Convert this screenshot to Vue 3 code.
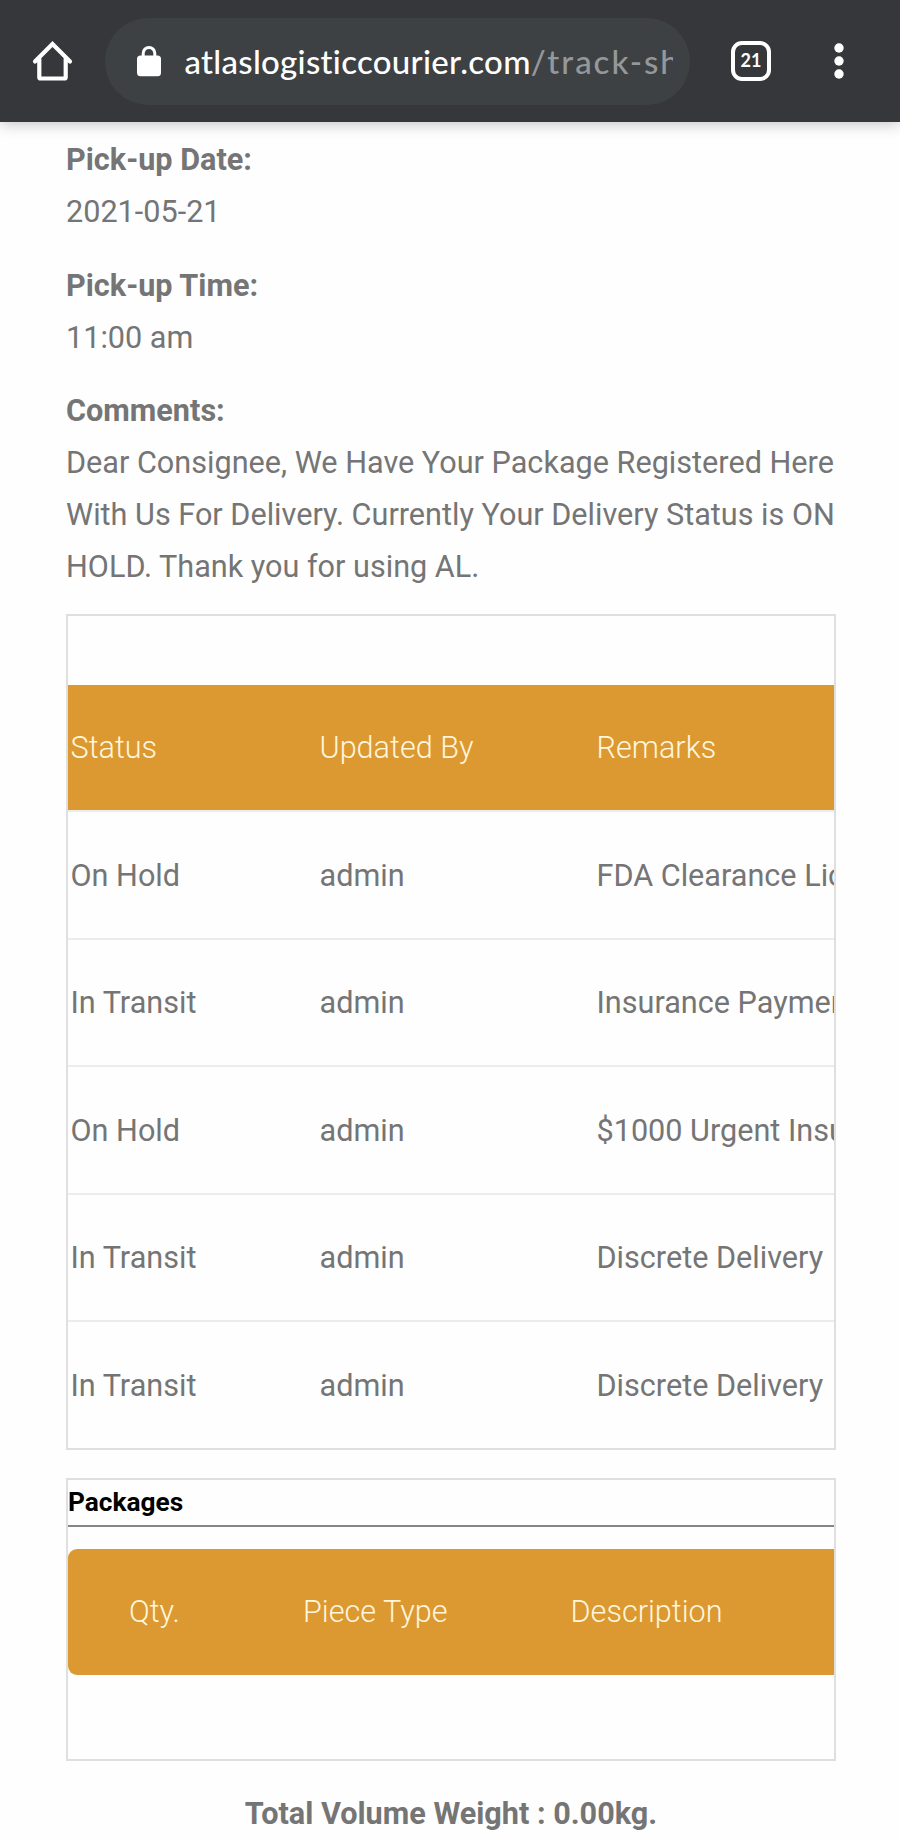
<script setup>
const details = [
  { label: 'Pick-up Date:', lines: ['2021-05-21'] },
  { label: 'Pick-up Time:', lines: ['11:00 am'] },
  {
    label: 'Comments:',
    lines: [
      'Dear Consignee, We Have Your Package Registered Here',
      'With Us For Delivery. Currently Your Delivery Status is ON',
      'HOLD. Thank you for using AL.',
    ],
  },
]

const history = [
  { status: 'On Hold', by: 'admin', remarks: 'FDA Clearance License' },
  { status: 'In Transit', by: 'admin', remarks: 'Insurance Payment' },
  { status: 'On Hold', by: 'admin', remarks: '$1000 Urgent Insurance' },
  { status: 'In Transit', by: 'admin', remarks: 'Discrete Delivery' },
  { status: 'In Transit', by: 'admin', remarks: 'Discrete Delivery' },
]
</script>

<template>
  <div class="screen">
    <header class="toolbar">
      <svg class="home" width="44" height="44" viewBox="0 0 44 44" fill="none" stroke="#fff" stroke-width="4.2" stroke-linecap="round" stroke-linejoin="round">
        <path d="M5 22.500 22.500 5 40 22.500" stroke-linejoin="miter" />
        <path d="M9.300 20v18.200q0 1.300 1.300 1.300h23.800q1.300 0 1.300-1.300V20" />
      </svg>
      <div class="address">
        <svg class="lock" width="24" height="32" viewBox="0 0 24 32">
          <path d="M6.200 12V8.200a5.800 5.800 0 0 1 11.600 0V12" fill="none" stroke="#fff" stroke-width="3" />
          <rect x="0" y="10.500" width="24" height="20.800" rx="3.500" fill="#fff" />
        </svg>
        <div class="url"><span class="host">atlaslogisticcourier.com</span><span class="path">/track-sh</span></div>
      </div>
      <div class="tabs">21</div>
      <svg class="menu" width="12" height="38" viewBox="0 0 12 38" fill="#fff">
        <circle cx="6" cy="6" r="4.700" />
        <circle cx="6" cy="19" r="4.700" />
        <circle cx="6" cy="32" r="4.700" />
      </svg>
    </header>

    <main class="content">
      <section v-for="item in details" :key="item.label" class="detail">
        <strong>{{ item.label }}</strong>
        <div v-for="line in item.lines" :key="line">{{ line }}</div>
      </section>

      <section class="panel history">
        <div class="row head"><span>Status</span><span>Updated By</span><span>Remarks</span></div>
        <div v-for="(row, i) in history" :key="i" class="row">
          <span>{{ row.status }}</span><span>{{ row.by }}</span><span>{{ row.remarks }}</span>
        </div>
      </section>

      <section class="panel packages">
        <h2>Packages</h2>
        <div class="package-head"><span>Qty.</span><span>Piece Type</span><span>Description</span></div>
      </section>

      <p class="total">Total Volume Weight : 0.00kg.</p>
    </main>
  </div>
</template>

<style>
body {
  margin: 0;
  background: #fefefe;
}
</style>

<style scoped>
.screen {
  width: 900px;
  height: 1840px;
  overflow: hidden;
  background: #fefefe;
  color: #757575;
  font: 400 30.625px/52px Roboto, "Liberation Sans", sans-serif;
}
.toolbar {
  box-sizing: border-box;
  height: 122px;
  padding: 0 55px 0 30px;
  display: flex;
  align-items: center;
  background: #36373b;
  box-shadow: 0 2px 14px rgba(0, 0, 0, 0.24);
}
.home {
  flex: none;
}
.address {
  box-sizing: border-box;
  width: 585px;
  height: 87px;
  margin-left: 31px;
  padding: 0 17px 0 32px;
  border-radius: 44px;
  display: flex;
  align-items: center;
  background: #3d4144;
}
.lock {
  flex: none;
}
.url {
  flex: none;
  width: 488px;
  margin-left: 23.500px;
  overflow: hidden;
  white-space: nowrap;
  color: #fff;
  font: 500 33px/52px Lato, "Noto Sans", sans-serif;
  letter-spacing: 0.300px;
}
.path {
  color: #95989a;
  letter-spacing: 2px;
}
.tabs {
  box-sizing: border-box;
  width: 40px;
  height: 40px;
  margin-left: 41px;
  border: 4.500px solid #fff;
  border-radius: 11px;
  color: #fff;
  text-align: center;
  font: 700 18px/31px Lato, sans-serif;
}
.menu {
  margin-left: auto;
}
.content {
  padding: 12px 64px 0 66px;
}
.detail {
  margin-bottom: 21.500px;
  white-space: nowrap;
}
.detail:nth-child(3) {
  margin-bottom: 20.500px;
}
.detail strong {
  display: block;
  font-weight: 700;
}
.panel {
  box-sizing: border-box;
  width: 770px;
  border: 2px solid #dfdfdf;
  overflow: hidden;
  white-space: nowrap;
}
.history {
  height: 836px;
  padding-top: 69px;
}
.row {
  box-sizing: border-box;
  height: 127.500px;
  border-bottom: 2px solid #ececec;
  display: grid;
  grid-template-columns: 249px 277px 300px;
  align-items: center;
  padding: 1.500px 0 0 2.500px;
}
.row:last-child {
  height: 125.500px;
  border-bottom: 0;
}
.head,
.package-head {
  background: #dc9932;
  color: #fff6dc;
  font-weight: 300;
}
.packages {
  height: 283px;
  margin-top: 28px;
}
h2 {
  box-sizing: border-box;
  height: 47px;
  margin: 0 0 22px;
  border-bottom: 2px solid #858585;
  color: #000;
  font-size: 26.250px;
  line-height: 45px;
  font-weight: 700;
}
.package-head {
  width: 900px;
  height: 126px;
  border-radius: 9px;
  display: grid;
  grid-template-columns: 174px 267.500px 300px;
  align-items: center;
  padding-left: 61px;
}
.total {
  margin: 27px 0 0;
  text-align: center;
  font-weight: 700;
}
</style>
